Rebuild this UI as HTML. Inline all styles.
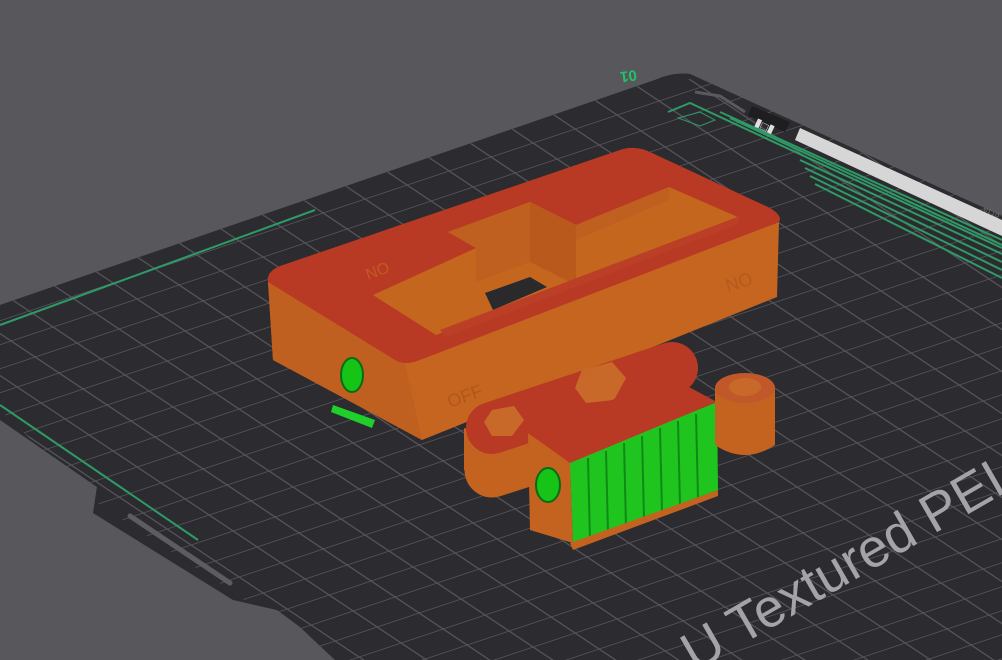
<!DOCTYPE html>
<html><head><meta charset="utf-8"><style>
html,body{margin:0;padding:0;background:#57575c;overflow:hidden}
svg{display:block}
</style></head><body>
<svg width="1002" height="660" viewBox="0 0 1002 660" xmlns="http://www.w3.org/2000/svg">
<defs>
<pattern id="g" patternUnits="userSpaceOnUse" width="1" height="1" patternTransform="matrix(42,-14,24,16,10,5)">
<rect width="1" height="1" fill="#2c2c30"/>
<path d="M0 0H1M0 0V1" stroke="#55555b" stroke-width="0.07" fill="none"/>
</pattern>
<clipPath id="bed"><path d="M0 305 L655 80 Q672 72 690 74 L1002 216 L1002 660 L335 660 L300 627 L277 610 L233 600 L93 513 L97 487 L0 420 Z"/></clipPath>
</defs>
<rect width="1002" height="660" fill="#57575c"/>
<path d="M0 305 L655 80 Q672 72 690 74 L1002 216 L1002 660 L335 660 L300 627 L277 610 L233 600 L93 513 L97 487 L0 420 Z" fill="#2c2c30"/>
<g clip-path="url(#bed)">
<path d="M0 305 L650 82 L700 78 L1002 216 L1002 660 L330 660 L230 590 L100 505 L0 410 Z" fill="url(#g)"/>
<path d="M0 305 L650 82 L700 78 L1002 216 L1002 200 L690 62 Z" fill="#2c2c30"/>
</g>
<path d="M695 92 L720 96 L745 112" stroke="#59595e" stroke-width="3" fill="none"/>
<path d="M130 516 L230 583" stroke="#5c5c62" stroke-width="5" stroke-linecap="round"/>
<path d="M752 106 L790 122 L785 132 L748 116 Z" fill="#1e1e21"/>
<text x="0" y="0" font-family="Liberation Sans, sans-serif" font-size="12" fill="#e0e0e0" transform="translate(775,128) rotate(-155)">▮□▮</text>
<path d="M800 128 L1002 220 L1002 236 L795 140 Z" fill="#d6d6d6"/>
<text font-family="Liberation Mono, monospace" font-size="7" fill="#777" transform="translate(1000,214) rotate(205)">OT10</text>
<g stroke="#2e9a66" stroke-width="2" fill="none">
<path d="M0 325 L315 210"/>
<path d="M0 405 L198 540"/>
<path d="M668 112 L690 103 L1002 248"/>
<path d="M720 112 L1002 240"/>
<path d="M730 118 L1002 245"/>
<path d="M800 160 L1002 254"/>
<path d="M805 168 L1002 262"/>
<path d="M810 176 L1002 270"/>
<path d="M815 184 L1002 278"/>
<path d="M678 118 L700 112 L715 120 L700 126 Z" stroke-width="1"/>
</g>
<text font-family="Liberation Sans, sans-serif" font-weight="bold" font-size="15" fill="#1fc46a" transform="translate(636,70) rotate(172)">01</text>
<text font-family="Liberation Sans, sans-serif" font-size="54" fill="#a4a4a8" transform="translate(695,672) rotate(-30)">U Textured PEI Pl</text>

<path d="M268 282 L273 360 L422 440 L777 297 L779 222 L405 363 Z" fill="#c6651f"/>
<path d="M268 282 L405 363 L422 440 L273 360 Z" fill="#c06020"/>
<path d="M268 282 Q266 272 280 266 L620 150 Q635 145 650 152 L770 208 Q783 216 779 222 L420 360 Q405 366 395 360 Z" fill="#b93a24"/>
<path d="M373 295 L476 248 L448 232 L530 202 L576 225 L669 187 L740 218 L436 335 Z" fill="#c5661f"/>
<path d="M448 232 L530 202 L530 262 L476 282 L476 248 Z" fill="#c06020"/>
<path d="M576 225 L669 187 L669 200 L576 240 Z" fill="#c06020"/>
<path d="M530 202 L530 262 L576 285 L576 225 Z" fill="#b9591c"/>
<path d="M485 293 L530 277 L547 287 L493 310 Z" fill="#2a2a2d"/>
<path d="M440 330 L740 216 L738 224 L446 337 Z" fill="#bb3f26"/>
<text font-family="Liberation Sans, sans-serif" font-size="16" fill="#c05a22" transform="translate(368,280) rotate(-20)">NO</text>
<text font-family="Liberation Sans, sans-serif" font-size="18" fill="#b35a1f" transform="translate(728,292) rotate(-18)">NO</text>
<text font-family="Liberation Sans, sans-serif" font-size="18" fill="#b0581c" transform="translate(450,408) rotate(-20)">OFF</text>
<ellipse cx="352" cy="375" rx="11" ry="17" fill="#16c418" stroke="#0b6a12" stroke-width="2"/>
<path d="M333 405 L375 420 L372 428 L331 412 Z" fill="#1fcf2a"/>

<path d="M492 470 L672 412" stroke="#c4631f" stroke-width="55" stroke-linecap="round"/>
<path d="M464 428 L464 470 L520 488 L520 440 Z" fill="#c4631f"/>
<path d="M492 428 L672 368" stroke="#b93a24" stroke-width="52" stroke-linecap="round"/>
<path d="M492 410 L514 406 L524 420 L512 436 L492 436 L484 422 Z" fill="#c8692a"/>
<path d="M582 370 L612 362 L626 378 L614 400 L586 403 L575 388 Z" fill="#c8692a"/>

<path d="M528 433 L570 463 L573 543 L530 530 Z" fill="#c4631f"/>
<path d="M528 433 L670 377 L717 402 L570 463 Z" fill="#b93a24"/>
<path d="M570 463 L717 402 L718 490 L573 543 Z" fill="#1fc41f"/>
<g stroke="#0f8a18" stroke-width="2">
<path d="M588 458 L590 540"/><path d="M606 451 L608 533"/><path d="M624 443 L626 526"/><path d="M642 436 L644 519"/><path d="M660 428 L662 512"/><path d="M678 421 L680 505"/><path d="M696 414 L698 498"/>
</g>
<path d="M570 543 L718 490 L718 496 L573 550 Z" fill="#c4631f"/>
<ellipse cx="548" cy="485" rx="12" ry="17" fill="#16c418" stroke="#0b6a12" stroke-width="2"/>

<path d="M715 388 L715 445 Q745 465 775 445 L775 388 Z" fill="#c4631f"/>
<ellipse cx="745" cy="388" rx="30" ry="15" fill="#c0582a"/>
<ellipse cx="745" cy="387" rx="16" ry="9" fill="#c8692a"/>
</svg>
</body></html>
